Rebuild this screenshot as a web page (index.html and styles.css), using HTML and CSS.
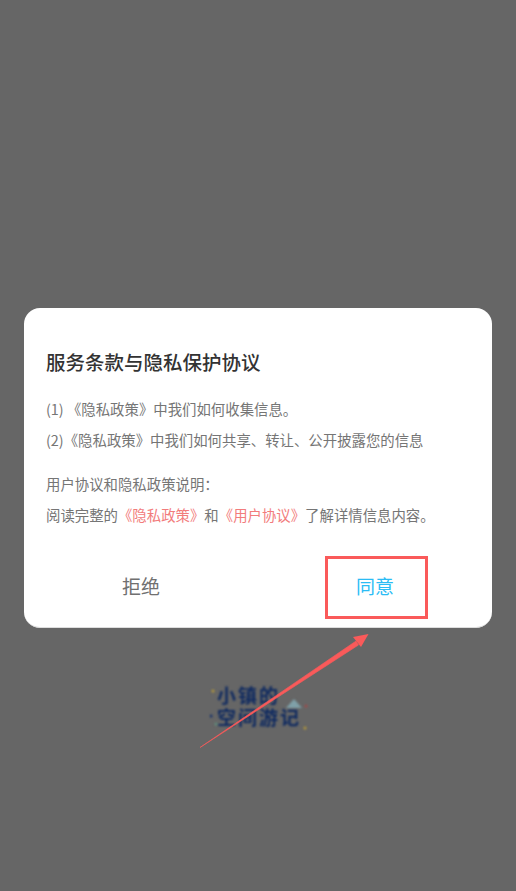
FILE: index.html
```html
<!DOCTYPE html>
<html lang="zh-CN">
<head>
    <meta charset="UTF-8">
    <meta name="viewport" content="width=device-width, initial-scale=1.0">
    <title>服务条款与隐私保护协议</title>
    <link rel="stylesheet" href="styles.css">
</head>
<body>
    <div class="screen">
        <div class="dialog">
            <h1 class="title">服务条款与隐私保护协议</h1>
            <div class="terms">
                <p>(1) 《隐私政策》中我们如何收集信息。</p>
                <p>(2)《隐私政策》中我们如何共享、转让、公开披露您的信息</p>
            </div>
            <div class="notes">
                <p>用户协议和隐私政策说明：</p>
                <p>阅读完整的<span class="link">《隐私政策》</span>和<span class="link">《用户协议》</span>了解详情信息内容。</p>
            </div>
            <div class="actions">
                <div class="btn reject">拒绝</div>
                <div class="btn agree">同意<span class="mark"></span></div>
            </div>
        </div>
        <div class="logo">
            <div class="logo-line">小镇的</div>
            <div class="logo-line">空间游记</div>
            <svg class="logo-bits" width="100" height="48" viewBox="0 0 100 48">
                <path d="M76 22 L84 13 L92 22 Z" fill="#7fa0a8"/>
                <circle cx="3" cy="5" r="1.5" fill="#b59a3a"/>
                <circle cx="1" cy="30" r="1.5" fill="#14306b"/>
                <circle cx="6" cy="38" r="1.5" fill="#5f8f7d"/>
                <circle cx="95" cy="42" r="1.5" fill="#b59a3a"/>
                <circle cx="96" cy="20" r="1.5" fill="#a04a4a"/>
            </svg>
        </div>

        <!-- annotation drawn over the page -->
        <svg class="arrow" width="516" height="891" viewBox="0 0 516 891">
            <path d="M200 747.5 L356 641 L358.5 645 Z" fill="#fa5a5a" stroke="#fa5a5a" stroke-width="0.6"/>
            <path d="M368.5 634 L353 637 L361 647 Z" fill="#fa5a5a"/>
        </svg>
    </div>
</body>
</html>
```

FILE: styles.css
```css
* {
    box-sizing: border-box;
}
body {
    margin: 0;
    font-family: "Noto Sans CJK SC", "Noto Sans", sans-serif;
}
p {
    margin: 0;
}
.screen {
    position: relative;
    width: 516px;
    height: 891px;
    padding: 308px 24px 0;
    overflow: hidden;
    background: #666;
}
.dialog {
    height: 320px;
    padding-top: 39px;
    background: #fff;
    border-radius: 16px;
    border-bottom: 1px solid #ddd;
}
.title {
    margin: 0;
    padding-left: 22px;
    font-size: 19.5px;
    line-height: 30px;
    font-weight: 500;
    color: #333;
}
.terms {
    margin-top: 16px;
    padding-left: 22px;
    font-size: 14.4px;
    line-height: 31px;
    color: #757575;
}
.notes {
    margin-top: 13px;
    padding-left: 22px;
    font-size: 14.4px;
    line-height: 31px;
    color: #757575;
}
.link {
    color: #f27c7c;
}
.actions {
    display: flex;
    margin-top: 26px;
}
.btn {
    position: relative;
    flex: 1;
    height: 60px;
    line-height: 60px;
    text-align: center;
    font-size: 19px;
    color: #707070;
}
.agree {
    color: #2bbcf5;
}
.mark {
    position: absolute;
    top: 0;
    left: 67px;
    width: 103px;
    height: 63px;
    border: 3px solid #fa5a5a;
}
.logo {
    position: relative;
    width: 96px;
    margin: 58px 0 0 186px;
    filter: blur(0.8px);
}
.logo-line {
    padding-left: 7px;
    font-family: "Liberation Sans", "Noto Sans CJK SC", sans-serif;
    font-size: 19px;
    line-height: 22px;
    letter-spacing: 2px;
    font-weight: 700;
    color: #0f2a60;
    white-space: nowrap;
}
.logo-bits {
    position: absolute;
    top: 0;
    left: 0;
}
.arrow {
    position: absolute;
    top: 0;
    left: 0;
}
```
